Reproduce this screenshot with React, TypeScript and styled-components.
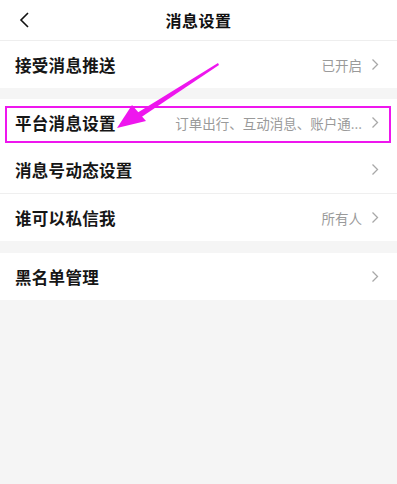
import React from "react";
import styled, { createGlobalStyle } from "styled-components";

const Global = createGlobalStyle`
  html, body { margin: 0; padding: 0; background: #f5f5f5; }
  body { font-family: "Noto Sans CJK SC", "Noto Sans", sans-serif; }
`;

const Page = styled.div`
  position: relative;
  width: 397px;
  min-height: 484px;
  background: #f5f5f5;
  overflow: hidden;
`;

const NavBar = styled.div`
  height: 40px;
  background: #fff;
  border-bottom: 1px solid #eeeeee;
  display: flex;
  align-items: center;
  justify-content: center;
  position: relative;
`;

const BackBtn = styled.div`
  position: absolute;
  left: 14px;
  top: 10px;
  width: 20px;
  height: 20px;
  display: flex;
  align-items: center;
  justify-content: center;
`;

const Title = styled.div`
  font-size: 16px;
  font-weight: 600;
  color: #111;
  letter-spacing: 0.5px;
`;

const Group = styled.div<{ $gap?: number }>`
  background: #fff;
  margin-top: ${(p) => p.$gap ?? 0}px;
`;

const Row = styled.div<{ $divider?: boolean; $marked?: boolean }>`
  position: relative;
  height: 47px;
  display: flex;
  align-items: center;
  padding: 0 18px 0 15px;
  ${(p) => (p.$divider ? "border-top: 1px solid #efefef;" : "")}
  ${(p) =>
    p.$marked
      ? `&::after {
          content: "";
          position: absolute;
          left: 5px;
          right: 6px;
          top: 7px;
          bottom: 3px;
          border: 2px solid #ee16ee;
          pointer-events: none;
        }`
      : ""}
`;

const Label = styled.div`
  flex: 1;
  font-size: 16.5px;
  font-weight: 600;
  color: #161616;
  letter-spacing: 0.3px;
  white-space: nowrap;
`;

const Value = styled.div`
  font-size: 13.5px;
  color: #9a9a9a;
  white-space: nowrap;
  margin-right: 9px;
`;

const Chevron = styled.svg`
  width: 8px;
  height: 13px;
  flex: none;
`;

const Arrow = styled.svg`
  position: absolute;
  left: 0;
  top: 0;
  pointer-events: none;
`;

function Arr() {
  return (
    <Chevron viewBox="0 0 8 13">
      <path d="M1.5 1.5 L6.5 6.5 L1.5 11.5" fill="none" stroke="#a8a8a8" strokeWidth="1.3" />
    </Chevron>
  );
}

type Item = { label: string; value?: string; marked?: boolean };

const group1: Item[] = [{ label: "接受消息推送", value: "已开启" }];
const group2: Item[] = [
  { label: "平台消息设置", value: "订单出行、互动消息、账户通...", marked: true },
  { label: "消息号动态设置" },
  { label: "谁可以私信我", value: "所有人" },
];
const group3: Item[] = [{ label: "黑名单管理" }];

function Rows({ items }: { items: Item[] }) {
  return (
    <>
      {items.map((it, i) => (
        <Row key={it.label} $divider={i > 0 && !items[i - 1].marked} $marked={it.marked}>
          <Label>{it.label}</Label>
          {it.value && <Value>{it.value}</Value>}
          <Arr />
        </Row>
      ))}
    </>
  );
}

export default function App() {
  return (
    <Page>
      <Global />
      <NavBar>
        <BackBtn>
          <svg width="12" height="16" viewBox="0 0 12 16">
            <path d="M10 1 L3 8 L10 15" fill="none" stroke="#111" strokeWidth="1.6" />
          </svg>
        </BackBtn>
        <Title>消息设置</Title>
      </NavBar>
      <Group>
        <Rows items={group1} />
      </Group>
      <Group $gap={11}>
        <Rows items={group2} />
      </Group>
      <Group $gap={12}>
        <Rows items={group3} />
      </Group>
      <Arrow width="397" height="484" viewBox="0 0 397 484">
        <polygon points="218,63 219,65 140,118 137,113" fill="#ee16ee" />
        <polygon points="117,128 132,105 146,121" fill="#ee16ee" />
      </Arrow>
    </Page>
  );
}
